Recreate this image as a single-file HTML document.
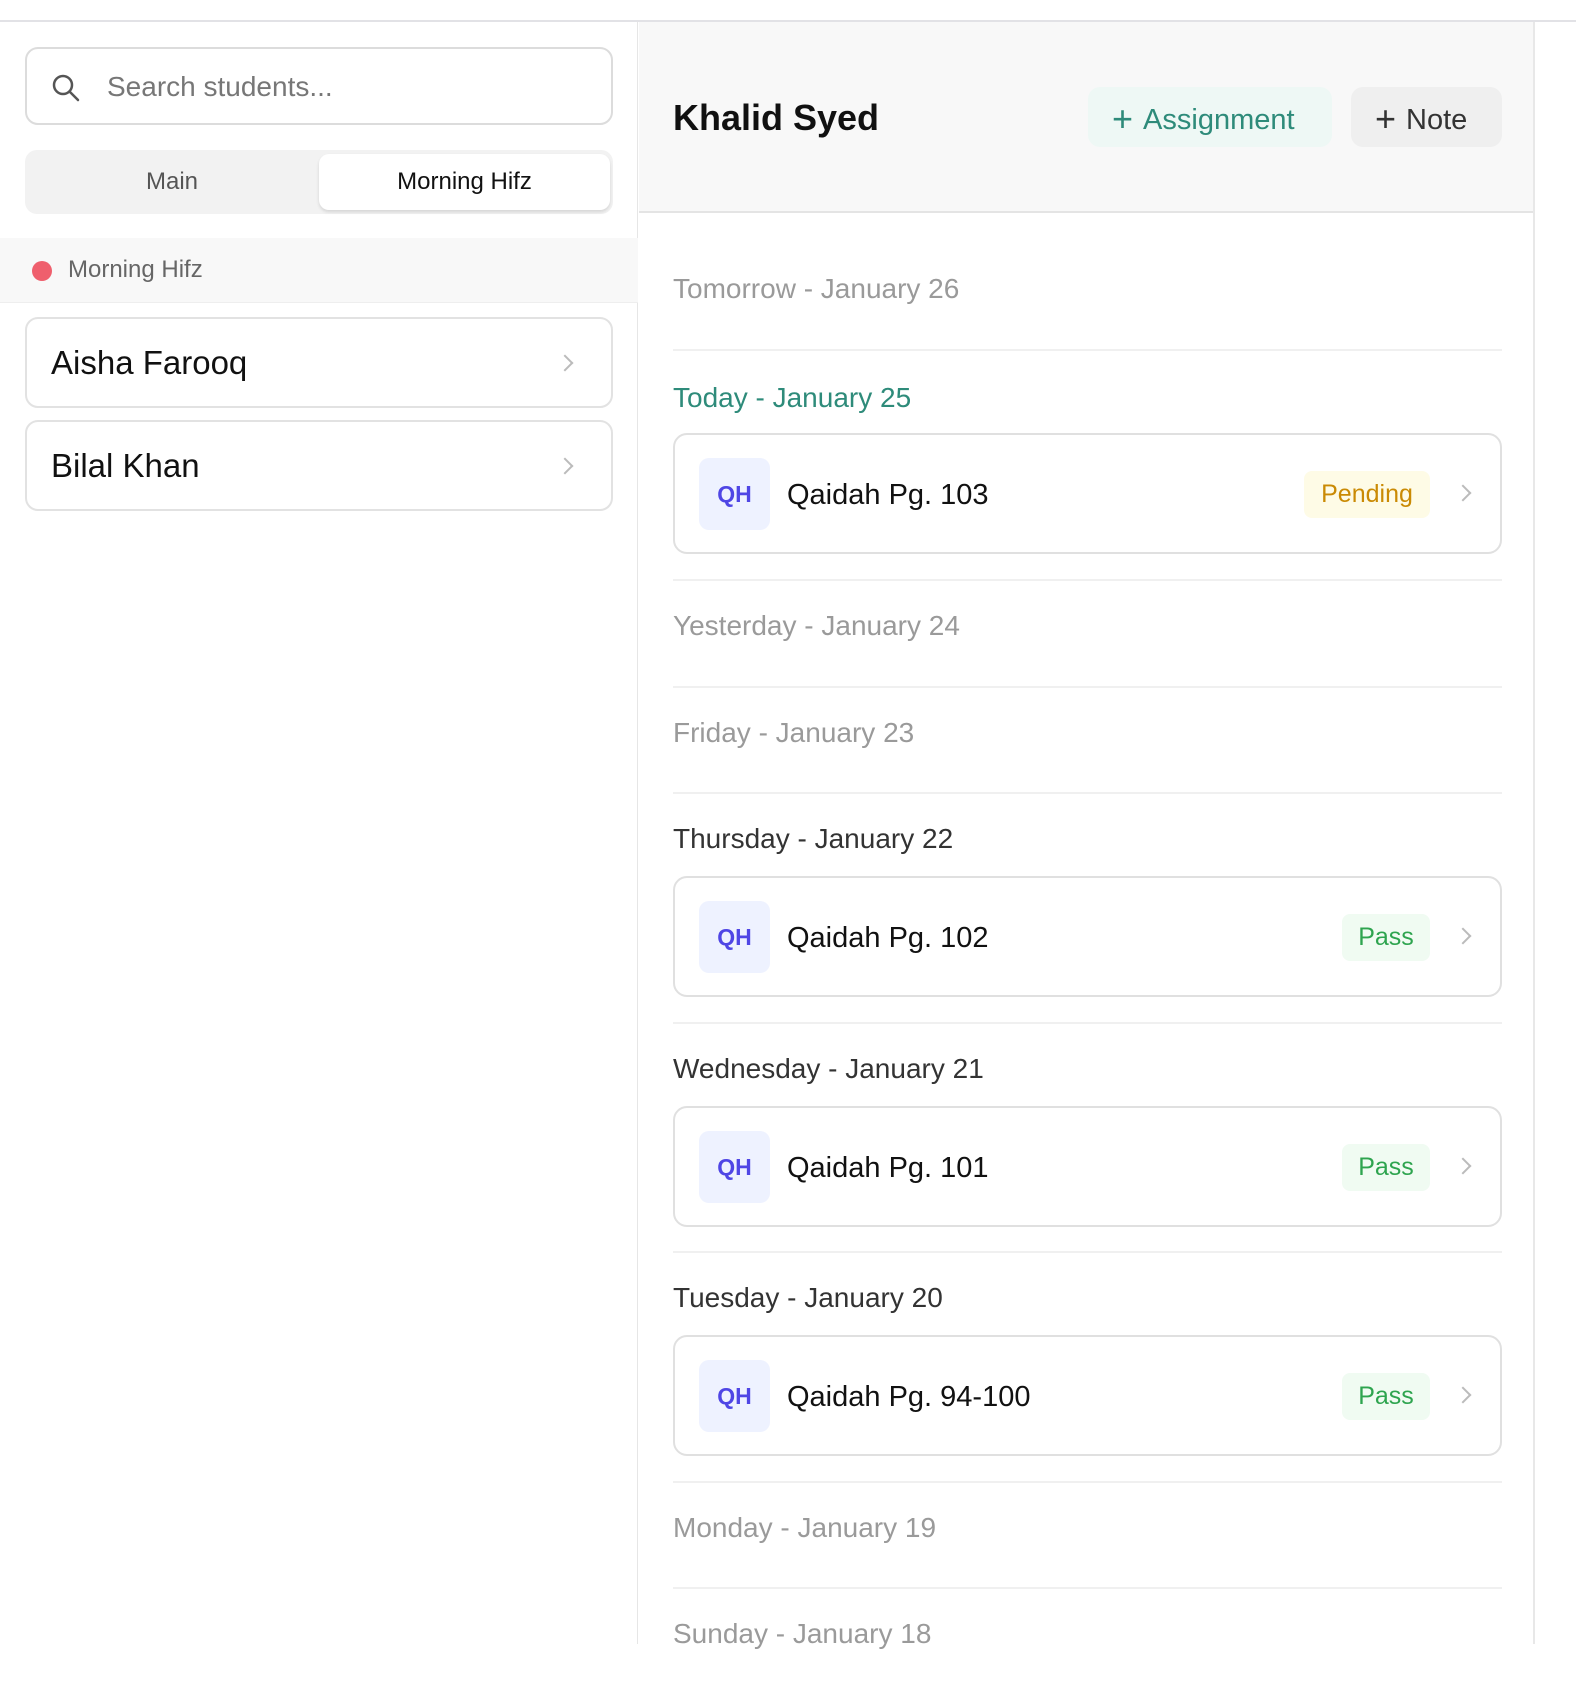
<!DOCTYPE html>
<html><head><meta charset="utf-8"><style>
*{box-sizing:border-box;margin:0;padding:0}
body{width:1576px;height:1644px;overflow:hidden;background:#fff;font-family:"Liberation Sans",sans-serif;color:#1a1a1a;position:relative}
.topline{position:absolute;left:0;top:20px;width:1576px;height:2px;background:#e2e2e6}
.side{position:absolute;left:0;top:22px;width:638px;height:1622px;border-right:1px solid #e6e6e6}
.search{position:absolute;left:25px;top:25px;width:588px;height:78px;border:2px solid #dcdcdc;border-radius:13px}
.search span{position:absolute;left:80px;top:22px;font-size:28px;color:#777}
.tabs{position:absolute;left:25px;top:128px;width:588px;height:64px;background:#f2f2f2;border-radius:12px}
.tab{position:absolute;top:0;height:64px;line-height:64px;text-align:center;font-size:24px;color:#555}
.tab.active{top:4px;height:56px;line-height:56px;left:294px;width:291px;background:#fff;border-radius:10px;color:#111;box-shadow:0 2px 3px rgba(0,0,0,.12)}
.group{position:absolute;left:0;top:216px;width:638px;height:65px;background:#f8f8f8;border-bottom:1px solid #eee}
.group .dot{position:absolute;left:32px;top:23px;width:20px;height:20px;border-radius:50%;background:#ef5f6d}
.group span{position:absolute;left:68px;top:18px;font-size:24px;color:#666}
.stu{position:absolute;left:25px;width:588px;height:91px;border:2px solid #e2e2e2;border-radius:13px}
.stu span{position:absolute;left:24px;top:25px;font-size:33px;color:#111}
.chev{position:absolute;width:12px;height:12px;border-right:2px solid #bbb;border-top:2px solid #bbb;transform:rotate(45deg)}
.main{position:absolute;left:639px;top:22px;width:896px;height:1622px;border-right:2px solid #e8e8e8}
.head{position:absolute;left:0;top:0;width:894px;height:191px;background:#f8f8f8;border-bottom:2px solid #e4e4e4}
.head h1{position:absolute;left:34px;top:75px;font-size:36px;font-weight:bold;color:#111}
.btn{position:absolute;top:65px;height:60px;border-radius:12px;font-size:29px;line-height:60px}
.b1{left:449px;width:244px;background:#eef8f5;color:#2e8b7a}
.b2{left:712px;width:151px;background:#efefef;color:#333}
.btn i{font-style:normal;font-size:36px;position:relative;top:2px;margin:0 10px 0 24px;font-weight:300}
.sec{position:absolute;left:34px;width:829px;border-bottom:2px solid #f0f0f0}
.lbl{position:absolute;left:0;font-size:28px;color:#9a9a9a}
.lbl.dark{color:#333}
.lbl.today{color:#2e8b7a}
.card{position:absolute;left:0;width:829px;height:121px;border:2px solid #e0e0e0;border-radius:14px}
.qh{position:absolute;left:24px;top:23px;width:71px;height:72px;background:#eef2ff;border-radius:10px;color:#4f46e5;font-weight:bold;font-size:23px;text-align:center;line-height:72px}
.title{position:absolute;left:112px;top:44px;font-size:29px;color:#111}
.badge{position:absolute;top:36px;height:47px;line-height:47px;border-radius:8px;font-size:25px;text-align:center}
.pend{left:629px;width:126px;background:#fefbe6;color:#ca8a04}
.pass{left:667px;width:88px;background:#f0fbf2;color:#2ea44f}
</style></head><body>
<div class="topline"></div>
<div class="side">
 <div class="search">
  <svg style="position:absolute;left:24px;top:24px" width="30" height="30" viewBox="0 0 30 30"><circle cx="12" cy="12" r="9" fill="none" stroke="#555" stroke-width="2.5"/><line x1="19" y1="19" x2="27" y2="27" stroke="#555" stroke-width="2.5" stroke-linecap="round"/></svg>
  <span>Search students...</span>
 </div>
 <div class="tabs"><div class="tab" style="left:0;width:294px">Main</div><div class="tab active">Morning Hifz</div></div>
 <div class="group"><div class="dot"></div><span>Morning Hifz</span></div>
 <div class="stu" style="top:295px"><span>Aisha Farooq</span><div class="chev" style="left:532px;top:38px"></div></div>
 <div class="stu" style="top:398px"><span>Bilal Khan</span><div class="chev" style="left:532px;top:38px"></div></div>
</div>
<div class="main">
 <div class="head"><h1>Khalid Syed</h1>
  <div class="btn b1"><i>+</i>Assignment</div>
  <div class="btn b2"><i>+</i>Note</div>
 </div>
 <div class="sec" style="top:193px;height:136px"><div class="lbl" style="top:58px">Tomorrow - January 26</div></div>
 <div class="sec" style="top:329px;height:230px"><div class="lbl today" style="top:31px">Today - January 25</div>
  <div class="card" style="top:82px"><div class="qh">QH</div><div class="title">Qaidah Pg. 103</div><div class="badge pend">Pending</div><div class="chev" style="left:782px;top:52px"></div></div></div>
 <div class="sec" style="top:559px;height:107px"><div class="lbl" style="top:29px">Yesterday - January 24</div></div>
 <div class="sec" style="top:666px;height:106px"><div class="lbl" style="top:29px">Friday - January 23</div></div>
 <div class="sec" style="top:772px;height:230px"><div class="lbl dark" style="top:29px">Thursday - January 22</div>
  <div class="card" style="top:82px"><div class="qh">QH</div><div class="title">Qaidah Pg. 102</div><div class="badge pass">Pass</div><div class="chev" style="left:782px;top:52px"></div></div></div>
 <div class="sec" style="top:1002px;height:229px"><div class="lbl dark" style="top:29px">Wednesday - January 21</div>
  <div class="card" style="top:82px"><div class="qh">QH</div><div class="title">Qaidah Pg. 101</div><div class="badge pass">Pass</div><div class="chev" style="left:782px;top:52px"></div></div></div>
 <div class="sec" style="top:1231px;height:230px"><div class="lbl dark" style="top:29px">Tuesday - January 20</div>
  <div class="card" style="top:82px"><div class="qh">QH</div><div class="title">Qaidah Pg. 94-100</div><div class="badge pass">Pass</div><div class="chev" style="left:782px;top:52px"></div></div></div>
 <div class="sec" style="top:1461px;height:106px"><div class="lbl" style="top:29px">Monday - January 19</div></div>
 <div class="sec" style="top:1567px;height:106px;border:none"><div class="lbl" style="top:29px">Sunday - January 18</div></div>
</div>
</body></html>
